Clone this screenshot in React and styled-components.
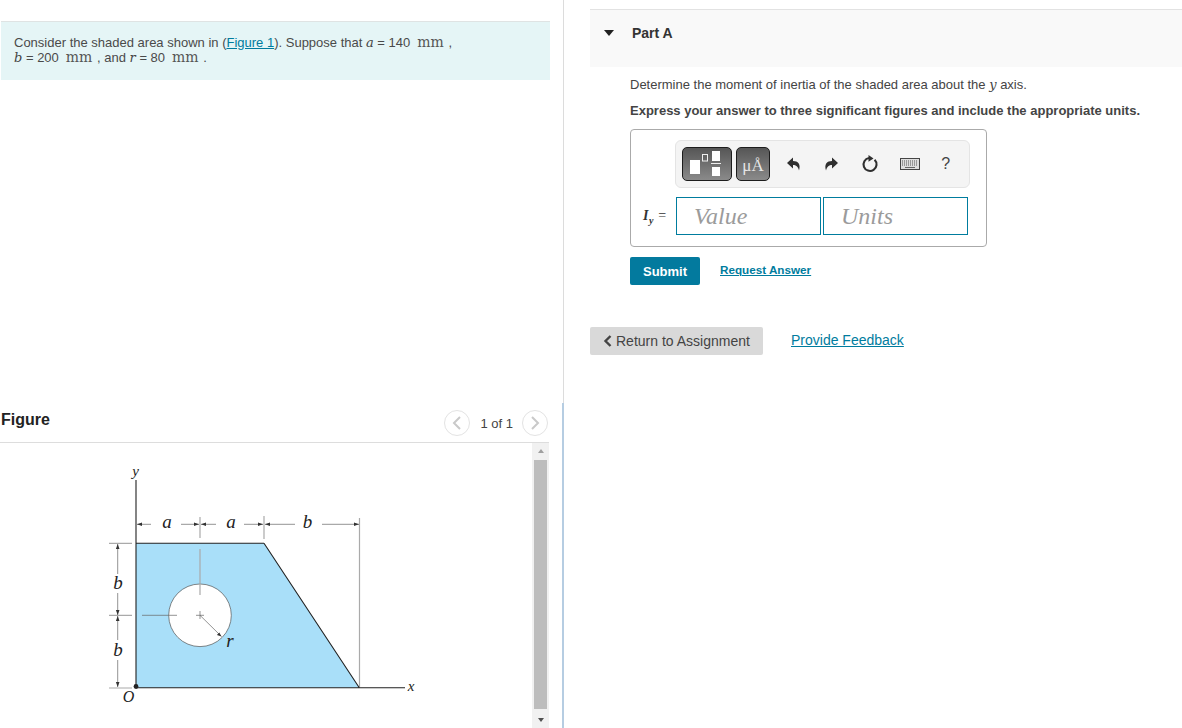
import React from "react";
import styled, { createGlobalStyle } from "styled-components";

const Global = createGlobalStyle`
  html, body { margin: 0; padding: 0; background: #fff; }
  body { font-family: "Liberation Sans", Arial, sans-serif; color: #333; overflow: hidden; }
`;

const Page = styled.div`
  display: flex;
  width: 1182px;
  height: 728px;
  overflow: hidden;
`;
const LeftPane = styled.div`
  width: 564px;
  flex: none;
  display: flex;
  flex-direction: column;
`;
const PromptArea = styled.div`
  height: 403px;
  flex: none;
  padding: 21px 13px 0 1px;
  border-right: 1px solid #dcdcdc;
  box-sizing: border-box;
`;
const Prompt = styled.div`
  height: 59px;
  box-sizing: border-box;
  background: #e5f5f6;
  border-top: 1px solid #dfe3e3;
  padding: 13px 13px 0;
  font-size: 13px;
  line-height: 15px;
  color: #4a4a4a;
`;
const Link = styled.a`
  color: #007c9e;
  text-decoration: underline;
`;
const MathVar = styled.i`
  font-family: "DejaVu Serif", serif;
  font-size: 13px;
  line-height: 1;
  color: #444;
`;
const MathUnit = styled.span`
  font-family: "DejaVu Serif", serif;
  font-size: 14px;
  line-height: 1;
  margin: 0 1px 0 7px;
  color: #555;
`;
const FigureSection = styled.section`
  flex: 1;
  min-height: 0;
  display: flex;
  flex-direction: column;
  border-right: 2px solid #b6cde2;
  box-sizing: border-box;
`;
const FigureHeader = styled.div`
  height: 39px;
  flex: none;
  margin-right: 13px;
  display: flex;
  align-items: center;
  justify-content: space-between;
  padding: 0 1px;
  border-bottom: 1px solid #dddddd;
`;
const FigureTitle = styled.h2`
  margin: -6px 0 0;
  font-size: 16px;
  font-weight: 700;
  color: #222;
`;
const Pager = styled.div`
  display: flex;
  align-items: center;
`;
const PagerButton = styled.span`
  width: 24px;
  height: 24px;
  border: 1px solid #e3e3e3;
  border-radius: 50%;
  display: flex;
  align-items: center;
  justify-content: center;
`;
const PagerText = styled.span`
  font-size: 13px;
  margin: 1px 9px 0 10px;
  color: #444;
`;
const FigureBody = styled.div`
  flex: 1;
  min-height: 0;
  display: flex;
  margin-right: 13px;
`;
const FigureCanvas = styled.div`
  flex: 1;
  min-width: 0;
  overflow: hidden;
`;
const Scrollbar = styled.div`
  width: 17px;
  flex: none;
  background: #f1f1f1;
  display: flex;
  flex-direction: column;
  align-items: center;
  justify-content: space-between;
  padding: 6px 0;
  box-sizing: border-box;
`;
const ScrollThumb = styled.div`
  width: 13px;
  flex: 1;
  background: #bdbdbd;
  margin: 7px 0 9px;
`;
const ScrollArrow = styled.span`
  width: 0;
  height: 0;
  border-left: 3.5px solid transparent;
  border-right: 3.5px solid transparent;
  ${(p) =>
    p.$up ? "border-bottom: 4px solid #a0a0a0;" : "border-top: 4px solid #505050;"}
`;
const RightPane = styled.main`
  flex: 1;
  min-width: 0;
  padding: 9px 0 0 26px;
`;
const PartHeader = styled.div`
  height: 58px;
  box-sizing: border-box;
  background: #f9f9f9;
  border-top: 1px solid #e2e2e2;
  display: flex;
  align-items: flex-start;
  padding: 15px 0 0 14px;
`;
const Caret = styled.span`
  width: 0;
  height: 0;
  margin-top: 5px;
  border-left: 5px solid transparent;
  border-right: 5px solid transparent;
  border-top: 6px solid #222;
`;
const PartTitle = styled.h3`
  margin: 0 0 0 18px;
  font-size: 14px;
  line-height: 16px;
  font-weight: 700;
  color: #333;
`;
const Content = styled.div`
  padding: 10px 0 0 40px;
`;
const Question = styled.p`
  margin: 0;
  font-size: 13px;
  line-height: 16px;
  color: #444;
`;
const Instruction = styled.p`
  margin: 10px 0 0;
  font-size: 13px;
  line-height: 16px;
  font-weight: 700;
  color: #444;
`;
const AnswerBox = styled.div`
  margin-top: 10px;
  width: 357px;
  height: 118px;
  box-sizing: border-box;
  border: 1px solid #aaaaaa;
  border-radius: 4px;
  padding: 10px 0 0 44px;
`;
const Toolbar = styled.div`
  width: 295px;
  height: 48px;
  box-sizing: border-box;
  background: #f4f4f4;
  border: 1px solid #e4e4e4;
  border-radius: 6px;
  display: flex;
  align-items: center;
  padding: 0 0 0 6px;
`;
const ToolButton = styled.span`
  width: ${(p) => p.$w}px;
  height: 34px;
  margin-right: 4px;
  flex: none;
  box-sizing: border-box;
  border: 1px solid #1d1d1d;
  border-radius: 5px;
  background: linear-gradient(#565656, #8a8a8a);
  display: flex;
  align-items: center;
  justify-content: center;
`;
const UnitGlyph = styled.span`
  font-family: "Liberation Serif", serif;
  font-size: 17px;
  line-height: 17px;
  color: #e6e6e6;
  margin-top: 2px;
`;
const ToolIcons = styled.div`
  flex: 1;
  display: flex;
  align-items: center;
  justify-content: space-around;
  padding: 0 8px 0 1px;
`;
const HelpGlyph = styled.span`
  font-size: 16px;
  color: #444;
`;
const InputRow = styled.div`
  display: flex;
  align-items: center;
  margin: 9px 0 0 -32px;
`;
const InputLabel = styled.span`
  width: 33px;
  font-family: "Liberation Serif", serif;
  font-size: 14px;
  letter-spacing: 0.6px;
  color: #333;
  white-space: nowrap;
`;
const LabelI = styled.i`
  font-weight: 700;
  sub { font-size: 10px; line-height: 0; }
`;
const Field = styled.span`
  width: 145px;
  height: 38px;
  box-sizing: border-box;
  border: 1px solid #007c9e;
  margin-right: 2px;
  padding-left: 17px;
  font-family: "Liberation Serif", serif;
  font-style: italic;
  font-size: 24px;
  line-height: 36px;
  color: #9b9b9b;
`;
const Actions = styled.div`
  display: flex;
  align-items: center;
  margin-top: 10px;
`;
const Submit = styled.button`
  width: 70px;
  height: 28px;
  padding: 0;
  border: 0;
  border-radius: 2px;
  background: #037a9e;
  color: #fff;
  font: 700 13px "Liberation Sans", sans-serif;
`;
const RequestLink = styled(Link)`
  margin: -3px 0 0 20px;
  font-size: 11.7px;
  font-weight: 700;
`;
const Footer = styled.div`
  display: flex;
  align-items: center;
  margin-top: 42px;
`;
const ReturnButton = styled.button`
  width: 173px;
  height: 28px;
  padding: 0 0 0 13px;
  border: 0;
  border-radius: 2px;
  background: #d9d9d9;
  color: #444;
  display: flex;
  align-items: center;
  gap: 3px;
  font: 14px "Liberation Sans", sans-serif;
`;
const FeedbackLink = styled(Link)`
  margin: -2px 0 0 28px;
  font-size: 14px;
`;

const Chevron = ({ dir }) => (
  <svg width="10" height="14" viewBox="0 0 10 14">
    <path d={dir === "left" ? "M8 1 L2 7 L8 13" : "M2 1 L8 7 L2 13"} fill="none" stroke="#c9c9c9" strokeWidth="2" />
  </svg>
);

const TemplateIcon = () => (
  <svg width="44" height="28" viewBox="0 0 44 28">
    <rect x="5" y="10" width="10" height="14" fill="#fff" />
    <rect x="17.5" y="4.5" width="5" height="6.5" fill="none" stroke="#eee" strokeWidth="1" />
    <rect x="27" y="1" width="8" height="10" fill="#fff" />
    <rect x="26" y="13" width="10" height="1" fill="#eee" />
    <rect x="27" y="17" width="8" height="9" fill="#fff" />
  </svg>
);
const Undo = ({ flip }) => (
  <svg width="16" height="16" viewBox="0 0 16 16" style={flip ? { transform: "scaleX(-1)" } : undefined}>
    <path d="M1 7 L7 1.5 V5 C12 5 15 8 13 14.5 C12 10.5 10 9 7 9 V12.5 Z" fill="#2f2f2f" />
  </svg>
);
const Reset = () => (
  <svg width="18" height="18" viewBox="0 0 18 18">
    <path d="M13.6 4.8 A6.5 6.5 0 1 1 8 3" fill="none" stroke="#2f2f2f" strokeWidth="2.1" />
    <path d="M7.5 0 L7.5 6.8 L12.5 3.4 Z" fill="#2f2f2f" />
  </svg>
);
const Keyboard = () => (
  <svg width="20" height="12" viewBox="0 0 20 12">
    <rect x="0.5" y="0.5" width="19" height="11" fill="#dedede" stroke="#444" />
    <path d="M2 3 H18 M2 5 H18 M2 7 H18" stroke="#555" strokeWidth="1" strokeDasharray="1 1" />
    <path d="M5 9.5 H15" stroke="#666" />
  </svg>
);

const ReturnChevron = () => (
  <svg width="10" height="12" viewBox="0 0 10 12">
    <path d="M7.5 1 L2.5 6 L7.5 11" fill="none" stroke="#444" strokeWidth="2.4" />
  </svg>
);

const labelStyle = { fontFamily: "'Liberation Serif', serif", fontStyle: "italic", fontSize: 19, fill: "#222" };
const Lbl = ({ x, y, children, size }) => (
  <text x={x} y={y} textAnchor="middle" style={size ? { ...labelStyle, fontSize: size } : labelStyle}>
    {children}
  </text>
);

const Diagram = () => (
  <svg width="531" height="285" viewBox="0 443 531 285" style={{ display: "block" }}>
    <path d="M136 543.3 H264 L359.3 687.7 H136 Z" fill="#a9dff9" />
    <circle cx="200" cy="615.3" r="31.3" fill="#fff" stroke="#555" strokeWidth="0.7" />
    <g stroke="#aaaaaa" strokeWidth="1.2" fill="none">
      <path d="M200 517 V538 M200 549 V595 M264 516 V539 M359.5 518 V687" />
      <path d="M109 543.3 H132 M109 615.3 H132 M109 688 H132" />
    </g>
    <g stroke="#666" strokeWidth="0.7" fill="none">
      <path d="M142 615.3 H177 M196 615.3 H204 M200 611 V619" />
      <path d="M137 524.3 H151 M181 524.3 H199 M201 524.3 H216 M244 524.3 H263 M265 524.3 H295 M322 524.3 H359" />
      <path d="M117.7 544 V574 M117.7 593 V615 M117.7 616 V640 M117.7 660 V687" />
      <path d="M200 615.3 L221.5 636.5" />
    </g>
    <g fill="#333">
      <path d="M137 524.3 l5 -1.8 v3.6 Z M199 524.3 l-5 -1.8 v3.6 Z M201 524.3 l5 -1.8 v3.6 Z M263 524.3 l-5 -1.8 v3.6 Z M265 524.3 l5 -1.8 v3.6 Z M359 524.3 l-5 -1.8 v3.6 Z" />
      <path d="M117.7 544 l-1.8 5 h3.6 Z M117.7 615 l-1.8 -5 h3.6 Z M117.7 616 l-1.8 5 h3.6 Z M117.7 687 l-1.8 -5 h3.6 Z M221.5 636.5 l-4.6 -1.6 2.4 -2.4 Z" />
    </g>
    <path d="M136 480 V687.7 M264 543.3 H136 M264 543.3 L359.3 687.7 M136 687.7 H405" fill="none" stroke="#222" strokeWidth="1.1" />
    <circle cx="136" cy="686.5" r="2.4" fill="#222" />
    <Lbl x={135.5} y={476} size={15}>y</Lbl>
    <Lbl x={167} y={528}>a</Lbl>
    <Lbl x={231} y={528}>a</Lbl>
    <Lbl x={307.5} y={528}>b</Lbl>
    <Lbl x={118} y={589}>b</Lbl>
    <Lbl x={118} y={656}>b</Lbl>
    <Lbl x={230} y={647}>r</Lbl>
    <Lbl x={411} y={691} size={15}>x</Lbl>
    <Lbl x={128.5} y={702} size={16}>O</Lbl>
  </svg>
);

export default function App() {
  return (
    <Page>
      <Global />
      <LeftPane>
        <PromptArea>
          <Prompt>
            Consider the shaded area shown in (<Link>Figure 1</Link>). Suppose that <MathVar>a</MathVar> = 140
            <MathUnit>mm</MathUnit> ,
            <br />
            <MathVar>b</MathVar> = 200<MathUnit>mm</MathUnit> , and <MathVar>r</MathVar> = 80<MathUnit>mm</MathUnit> .
          </Prompt>
        </PromptArea>
        <FigureSection>
          <FigureHeader>
            <FigureTitle>Figure</FigureTitle>
            <Pager>
              <PagerButton><Chevron dir="left" /></PagerButton>
              <PagerText>1 of 1</PagerText>
              <PagerButton><Chevron dir="right" /></PagerButton>
            </Pager>
          </FigureHeader>
          <FigureBody>
            <FigureCanvas><Diagram /></FigureCanvas>
            <Scrollbar>
              <ScrollArrow $up />
              <ScrollThumb />
              <ScrollArrow />
            </Scrollbar>
          </FigureBody>
        </FigureSection>
      </LeftPane>
      <RightPane>
        <PartHeader>
          <Caret />
          <PartTitle>Part A</PartTitle>
        </PartHeader>
        <Content>
          <Question>
            Determine the moment of inertia of the shaded area about the <MathVar>y</MathVar> axis.
          </Question>
          <Instruction>Express your answer to three significant figures and include the appropriate units.</Instruction>
          <AnswerBox>
            <Toolbar>
              <ToolButton $w={50}><TemplateIcon /></ToolButton>
              <ToolButton $w={34}><UnitGlyph>μÅ</UnitGlyph></ToolButton>
              <ToolIcons>
                <Undo />
                <Undo flip />
                <Reset />
                <Keyboard />
                <HelpGlyph>?</HelpGlyph>
              </ToolIcons>
            </Toolbar>
            <InputRow>
              <InputLabel>
                <LabelI>I<sub>y</sub></LabelI> =
              </InputLabel>
              <Field>Value</Field>
              <Field>Units</Field>
            </InputRow>
          </AnswerBox>
          <Actions>
            <Submit>Submit</Submit>
            <RequestLink>Request Answer</RequestLink>
          </Actions>
        </Content>
        <Footer>
          <ReturnButton><ReturnChevron />Return to Assignment</ReturnButton>
          <FeedbackLink>Provide Feedback</FeedbackLink>
        </Footer>
      </RightPane>
    </Page>
  );
}
